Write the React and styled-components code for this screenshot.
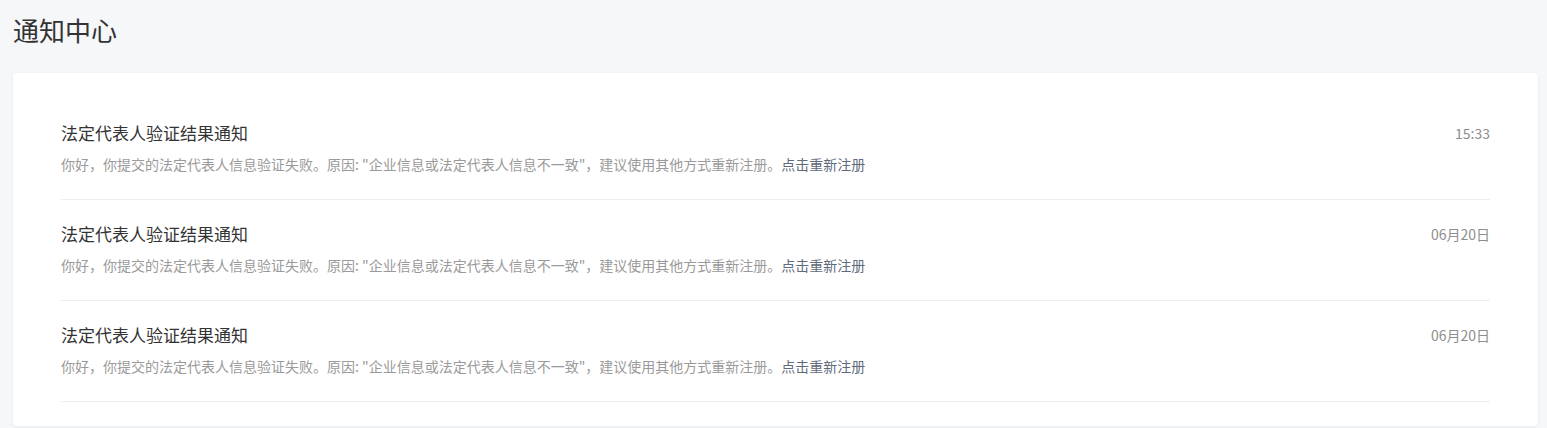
import React from 'react';
import styled, { createGlobalStyle } from 'styled-components';

const GlobalStyle = createGlobalStyle`
  html, body {
    margin: 0;
    padding: 0;
    background: #f5f7f9;
    font-family: "Noto Sans CJK SC", "Noto Sans", sans-serif;
  }
`;

const Page = styled.div`
  padding: 13px 9px 0 13px;
  height: 428px;
  box-sizing: border-box;
  overflow: hidden;
`;

const PageTitle = styled.h1`
  margin: 0 0 26px 0;
  font-size: 26px;
  line-height: 34px;
  font-weight: 400;
  color: #333;
`;

const Card = styled.div`
  background: #fff;
  border-radius: 4px;
  box-shadow: 0 1px 4px rgba(0, 0, 0, 0.06);
  padding: 26px 48px 24px 48px;
`;

const Item = styled.div`
  padding: 23px 0 25px 0;
  border-bottom: 1px solid #eceef2;
`;

const ItemHead = styled.div`
  display: flex;
  justify-content: space-between;
  align-items: center;
`;

const ItemTitle = styled.div`
  font-size: 17px;
  line-height: 22px;
  color: #333;
`;

const ItemTime = styled.div`
  font-size: 14px;
  line-height: 22px;
  color: #8e8e8e;
`;

const ItemDesc = styled.div`
  margin-top: 10px;
  font-size: 14px;
  line-height: 20px;
  color: #9a9a9a;
`;

const Link = styled.a`
  color: #5f6b7d;
  cursor: pointer;
  text-decoration: none;
`;

const notices = [
  { id: 1, time: '15:33' },
  { id: 2, time: '06月20日' },
  { id: 3, time: '06月20日' },
];

export default function App() {
  return (
    <>
      <GlobalStyle />
      <Page>
        <PageTitle>通知中心</PageTitle>
        <Card>
          {notices.map((n) => (
            <Item key={n.id}>
              <ItemHead>
                <ItemTitle>法定代表人验证结果通知</ItemTitle>
                <ItemTime>{n.time}</ItemTime>
              </ItemHead>
              <ItemDesc>
                你好，你提交的法定代表人信息验证失败。原因: "企业信息或法定代表人信息不一致"，建议使用其他方式重新注册。
                <Link>点击重新注册</Link>
              </ItemDesc>
            </Item>
          ))}
        </Card>
      </Page>
    </>
  );
}
